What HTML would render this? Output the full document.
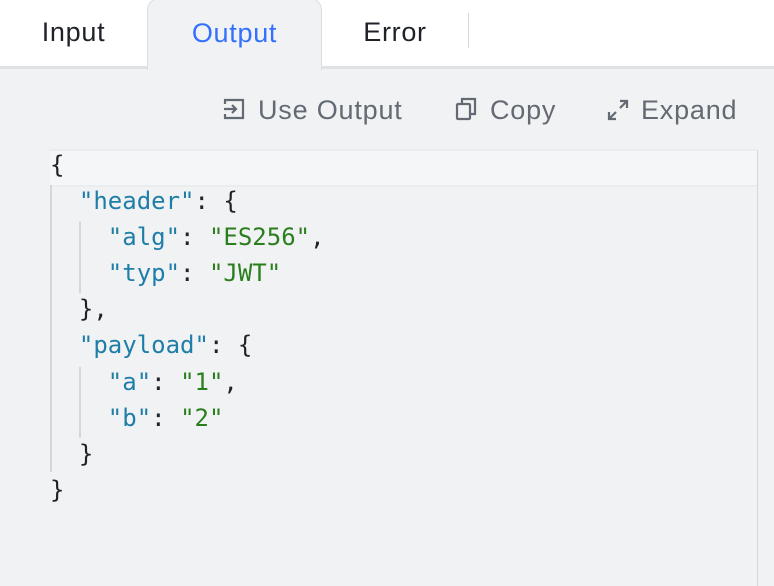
<!DOCTYPE html>
<html><head><style>
body{margin:0;width:774px;height:586px;background:#f1f2f4;font-family:"Liberation Sans",sans-serif;overflow:hidden;position:relative}
.top{position:absolute;left:0;top:0;width:774px;height:66px;background:#fff;border-bottom:3px solid #e1e2e5}
.tab{position:absolute;top:0;height:66px;line-height:64px;font-size:27px;letter-spacing:0.7px;color:#1f2329;text-align:center}
.act{left:147px;width:173px;background:#f1f2f4;border:1px solid #dcdde0;border-bottom:none;border-radius:12px 12px 0 0;color:#3370ff;top:-2px;height:71px;line-height:68px}
.sep{position:absolute;left:468px;top:13px;width:1px;height:35px;background:#d5d6d9}
.tb{position:absolute;top:92px;font-size:27px;letter-spacing:0.8px;color:#646a73;line-height:36px}
.code{position:absolute;left:50px;top:147px;font-family:"DejaVu Sans Mono",monospace;font-size:24px;line-height:36.1px;color:#1f2329;white-space:pre}
.k{color:#1f7ea8}.s{color:#2a7e1d}
.hl{position:absolute;left:50px;top:149px;width:707px;height:34px;background:#f5f6f7;border-top:2px solid #ebecee;border-bottom:2px solid #ebecee}
.g{position:absolute;width:2px;background:#d5d6d9}
svg{position:absolute}
</style></head><body>
<div class="top"></div>
<div class="tab" style="left:0;width:147px">Input</div>
<div class="tab act">Output</div>
<div class="tab" style="left:321px;width:148px">Error</div>
<div class="sep"></div>
<svg style="left:222px;top:97px" width="24" height="24" viewBox="0 0 24 24" fill="none" stroke="#646a73" stroke-width="2.2"><path d="M3 7V3h18v18H3v-4M2 12h12M10 8l4 4-4 4"/></svg>
<div class="tb" style="left:258px">Use Output</div>
<svg style="left:455px;top:97px" width="24" height="24" viewBox="0 0 24 24" fill="none" stroke="#646a73" stroke-width="2.2"><rect x="2" y="7" width="13" height="15" rx="1"/><path d="M7 7V2h13v15h-5"/></svg>
<div class="tb" style="left:490px">Copy</div>
<svg style="left:606px;top:98px" width="24" height="24" viewBox="0 0 24 24" fill="none" stroke="#646a73" stroke-width="2.2"><path d="M14 3h7v7M21 3l-7 7M3 14v7h7M3 21l7-7"/></svg>
<div class="tb" style="left:641px">Expand</div>
<div class="hl"></div>
<div style="position:absolute;left:757px;top:150px;width:1px;height:436px;background:#d5d6d9"></div>
<div class="g" style="left:50px;top:185px;height:287px"></div>
<div class="g" style="left:79px;top:222px;height:71px"></div>
<div class="g" style="left:79px;top:367px;height:71px"></div>
<div class="code">{
  <span class="k">"header"</span>: {
    <span class="k">"alg"</span>: <span class="s">"ES256"</span>,
    <span class="k">"typ"</span>: <span class="s">"JWT"</span>
  },
  <span class="k">"payload"</span>: {
    <span class="k">"a"</span>: <span class="s">"1"</span>,
    <span class="k">"b"</span>: <span class="s">"2"</span>
  }
}</div>
</body></html>
